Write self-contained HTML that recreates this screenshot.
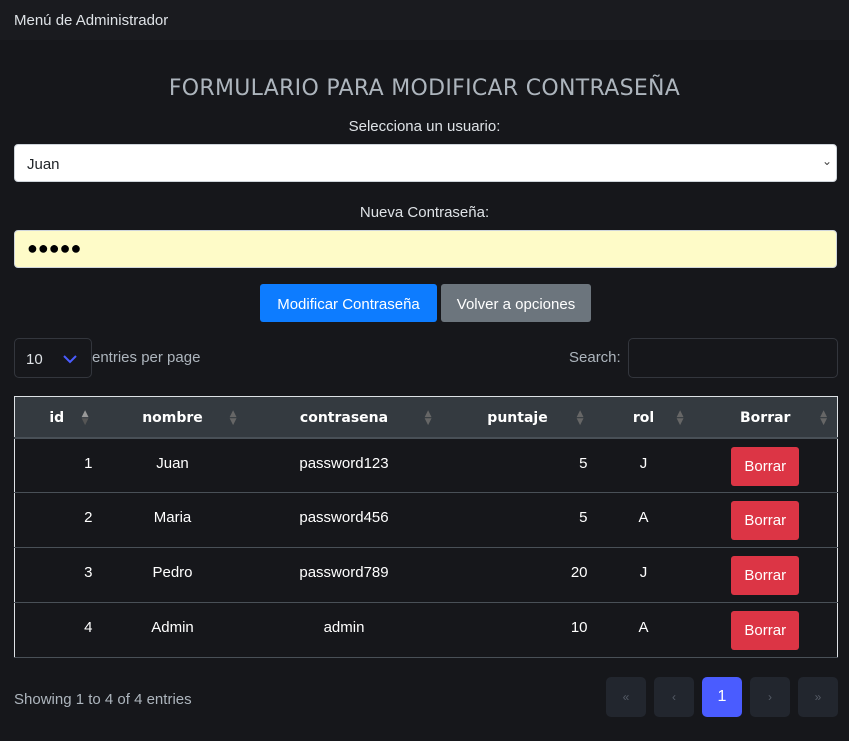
<!DOCTYPE html>
<html><head><meta charset="utf-8"><style>
*{box-sizing:border-box;margin:0;padding:0}
body{width:849px;height:741px;background:#16171b;font-family:"Liberation Sans",sans-serif;color:#dee2e6;position:relative;overflow:hidden}
.nav{height:40px;background:#1a1b1f;padding:12px 14px;font-size:15px;color:#dee2e6}
.abs{position:absolute}
h1{position:absolute;top:76px;left:0;width:849px;text-align:center;font-family:"Comic Sans MS","DejaVu Sans",sans-serif;font-weight:normal;font-size:22px;color:#adb5bd;letter-spacing:.3px}
.lbl{position:absolute;left:0;width:849px;text-align:center;font-size:15px;color:#dee2e6}
.sel{left:14px;width:823px;height:38px;background:#fff;border:1px solid #ced4da;border-radius:4px;color:#212529;font-size:15px;padding:11px 12px}
.pw{left:14px;top:230px;width:823px;height:38px;background:#fefbc8;border:1px solid #ced4da;border-radius:4px;color:#000;font-size:18px;padding:7px 12px;letter-spacing:0}
.btn{top:284px;height:38px;font-size:15px;color:#fff;padding:12px 8px;border-radius:3px;text-align:center}
table{position:absolute;left:14px;top:396px;width:824px;border-collapse:collapse;border:1px solid #dee2e6;font-size:15px;table-layout:fixed}
th{background:#343a40;height:41px;font-family:"Comic Sans MS","DejaVu Sans",sans-serif;font-weight:bold;font-size:14px;color:#fff;border-bottom:2px solid #495057;position:relative;padding-top:2px}
td{height:55px;border-bottom:1px solid #495057;text-align:center;color:#fff;vertical-align:top;padding-top:16px}
.ar{position:absolute;right:10px;top:13px;font-size:9px;line-height:8px;color:#666}
.rb{display:inline-block;background:#dc3545;color:#fff;padding:11px 13px;border-radius:3px;margin-top:-8px}
.pg{top:677px;width:40px;height:40px;border-radius:5px;background:#22262e;color:#555b66;text-align:center;line-height:40px;font-size:12px}
.n{text-align:right;padding-right:6px}
</style></head><body>
<div class="nav">Menú de Administrador</div>
<h1>FORMULARIO PARA MODIFICAR CONTRASEÑA</h1>
<div class="lbl" style="top:118px">Selecciona un usuario:</div>
<div class="abs sel" style="top:144px">Juan<span style="position:absolute;right:4px;top:9px;font-size:12px;color:#444">&#8964;</span></div>
<div class="lbl" style="top:204px">Nueva Contraseña:</div>
<div class="abs pw">●●●●●</div>
<div class="abs btn" style="left:260px;width:177px;background:#0d7cff">Modificar Contraseña</div>
<div class="abs btn" style="left:441px;width:150px;background:#6c757d">Volver a opciones</div>
<div class="abs" style="left:14px;top:338px;width:78px;height:40px;border:1px solid #33363d;border-radius:5px;padding:12px 11px;font-size:15px">10<svg style="position:absolute;left:48px;top:16px" width="14" height="9"><path d="M1 1l6 6 6-6" stroke="#4a5cff" stroke-width="2" fill="none"/></svg></div>
<div class="abs" style="left:92px;top:349px;font-size:15px;color:#adb5bd">entries per page</div>
<div class="abs" style="left:569px;top:349px;font-size:15px;color:#adb5bd">Search:</div>
<div class="abs" style="left:628px;top:338px;width:210px;height:40px;border:1px solid #33363d;border-radius:5px"></div>
<table>
<colgroup><col style="width:84px"><col style="width:148px"><col style="width:195px"><col style="width:152px"><col style="width:100px"><col></colgroup>
<tr><th>id<span class="ar" style="color:#999">▲<br><span style="color:#555">▼</span></span></th><th>nombre<span class="ar">▲<br>▼</span></th><th>contrasena<span class="ar">▲<br>▼</span></th><th>puntaje<span class="ar">▲<br>▼</span></th><th>rol<span class="ar">▲<br>▼</span></th><th>Borrar<span class="ar">▲<br>▼</span></th></tr>
<tr><td class="n">1</td><td>Juan</td><td>password123</td><td class="n">5</td><td>J</td><td><span class="rb">Borrar</span></td></tr>
<tr><td class="n">2</td><td>Maria</td><td>password456</td><td class="n">5</td><td>A</td><td><span class="rb">Borrar</span></td></tr>
<tr><td class="n">3</td><td>Pedro</td><td>password789</td><td class="n">20</td><td>J</td><td><span class="rb">Borrar</span></td></tr>
<tr><td class="n">4</td><td>Admin</td><td>admin</td><td class="n">10</td><td>A</td><td><span class="rb">Borrar</span></td></tr>
</table>
<div class="abs" style="left:14px;top:691px;font-size:15px;color:#adb5bd">Showing 1 to 4 of 4 entries</div>
<div class="abs pg" style="left:606px">«</div>
<div class="abs pg" style="left:654px">‹</div>
<div class="abs pg" style="left:702px;background:#4a5cff;color:#fff;font-size:16px">1</div>
<div class="abs pg" style="left:750px">›</div>
<div class="abs pg" style="left:798px">»</div>
</body></html>
